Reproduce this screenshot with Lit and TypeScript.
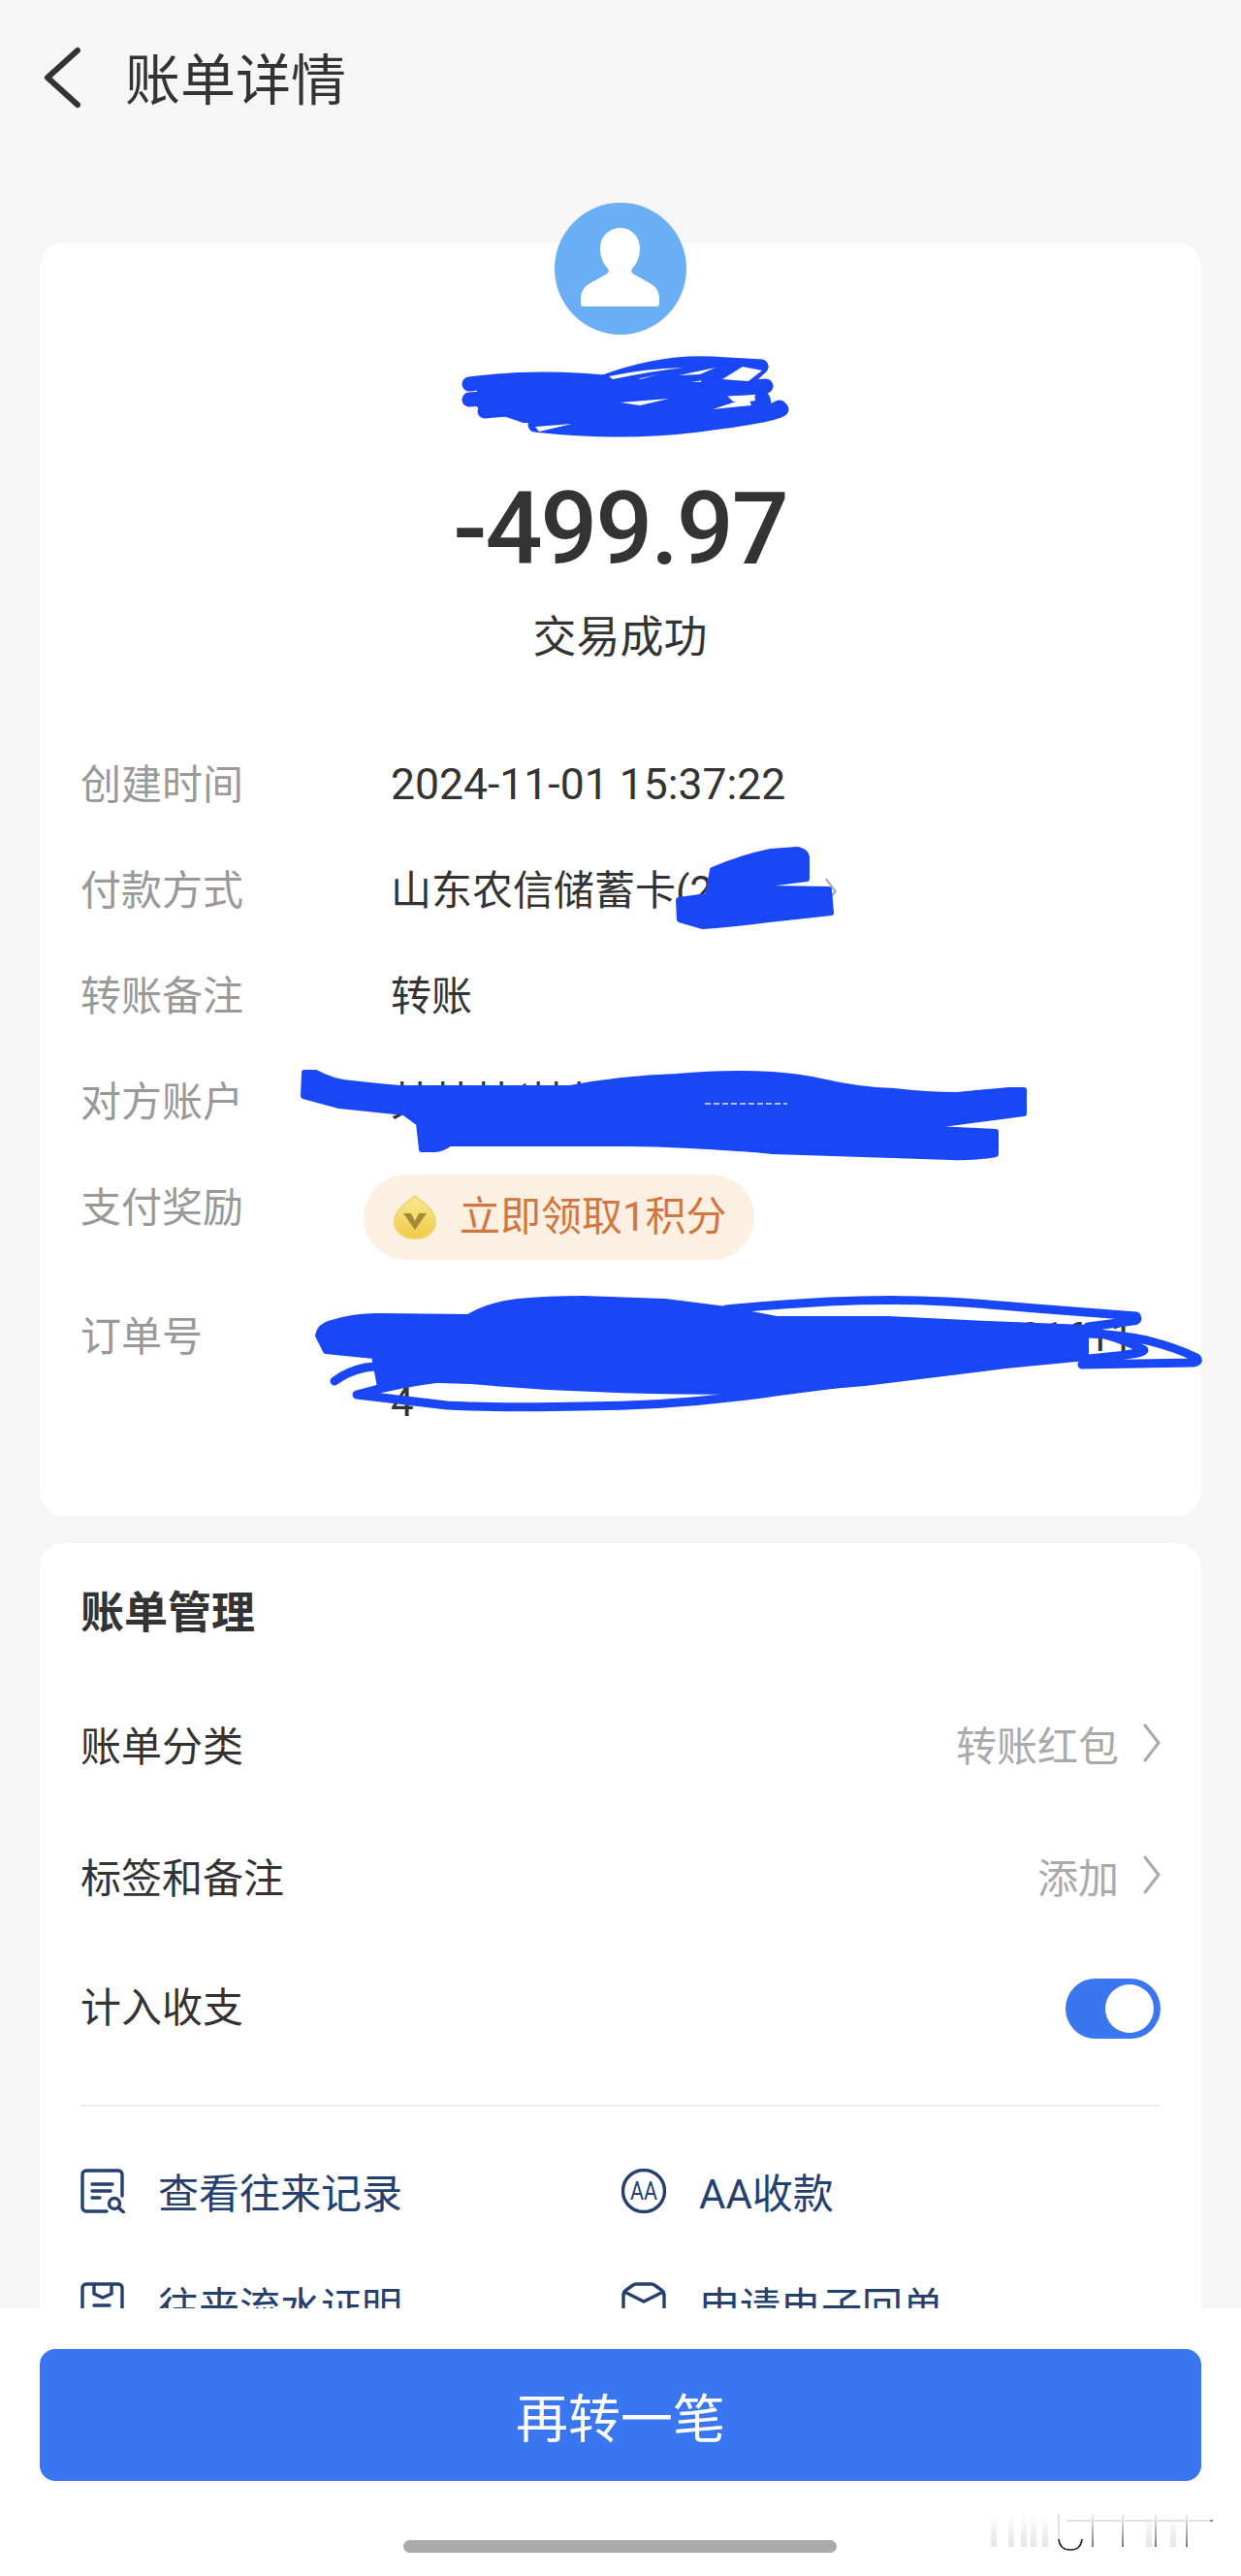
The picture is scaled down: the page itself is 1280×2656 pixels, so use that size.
import { LitElement, html, css, svg } from 'lit';
import { customElement } from 'lit/decorators.js';

const chevron = html`<svg class="chev" viewBox="0 0 20 44" fill="none" stroke="#aaa" stroke-width="3" stroke-linecap="round" stroke-linejoin="round"><path d="M3 4 L17 22 L3 40"/></svg>`;

const iconRecords = svg`
  <path d="M27 44 H6 a4 4 0 0 1 -4 -4 V6 a4 4 0 0 1 4 -4 H39 a4 4 0 0 1 4 4 V28"/>
  <path d="M12 16 H33 M12 23 H31 M12 30 H20"/>
  <circle cx="35" cy="36" r="5.5"/>
  <path d="M39 40 L44.5 45"/>`;

const iconProof = svg`
  <path d="M27 44 H6 a4 4 0 0 1 -4 -4 V6 a4 4 0 0 1 4 -4 H39 a4 4 0 0 1 4 4 V40"/>
  <path d="M14 3 V12 L23 16 L32 12 V3 M14 24 H30"/>`;

const iconAA = svg`
  <circle cx="23" cy="23" r="21.5"/>
  <text x="9" y="32" font-family="Roboto, sans-serif" font-size="26" font-weight="400" fill="#24406f" stroke="none" textLength="28" lengthAdjust="spacingAndGlyphs">AA</text>`;

const iconMail = svg`
  <path d="M2 40 V14 Q2 10 5 8 L12 3 Q13 2 15 2 H31 Q33 2 34 3 L41 8 Q44 10 44 14 V40"/>
  <path d="M3 10 L23 20 L43 10"/>`;

@customElement('app-root')
export class AppRoot extends LitElement {
  static styles = css`
    :host {
      display: block;
      position: relative;
      width: 1280px;
      height: 2656px;
      overflow: hidden;
      background: #f6f6f6;
      color: #333;
      font-family: Roboto, 'Noto Sans CJK SC', sans-serif;
      font-size: 42px;
    }
    .main {
      height: 2380px;
      overflow: hidden;
    }
    .header {
      height: 156px;
      display: flex;
      align-items: center;
      padding-left: 44px;
      gap: 45px;
      font-size: 57px;
      margin-bottom: 94px;
    }
    .header svg {
      width: 40px;
      height: 64px;
      margin-top: 4px;
    }
    .card {
      margin: 0 41px;
      background: #fff;
      border-radius: 26px;
    }
    .bill {
      padding: 0 43px 84px 42px;
      margin-bottom: 28px;
    }
    .summary {
      display: flex;
      flex-direction: column;
      align-items: center;
      text-align: center;
    }
    .avatar {
      width: 136px;
      height: 136px;
      margin-top: -41px;
      border-radius: 50%;
      background: #6aaef5;
    }
    .avatar svg {
      display: block;
      width: 136px;
      height: 136px;
    }
    .name {
      margin-top: 28px;
      height: 90px;
      line-height: 90px;
      font-size: 45px;
    }
    .amount {
      margin-top: 23px;
      font-size: 104px;
      font-weight: 500;
      line-height: 120px;
      letter-spacing: -2.2px;
    }
    .status {
      margin-top: 22px;
      font-size: 45px;
      line-height: 60px;
    }
    .rows {
      margin-top: 67px;
    }
    .row {
      display: flex;
      line-height: 109px;
    }
    .label {
      width: 320px;
      flex: none;
      color: #999;
    }
    .value {
      display: flex;
      align-items: center;
      white-space: nowrap;
    }
    .value.date {
      font-size: 44.5px;
    }
    .value .chev {
      width: 18px;
      height: 30px;
      margin-left: 113px;
    }
    .pill {
      display: flex;
      align-items: center;
      gap: 23px;
      height: 88px;
      margin: 20px 0 25px -28px;
      padding: 0 28px 0 30px;
      border-radius: 44px;
      background: #fcf0e3;
      color: #d2763f;
      line-height: 88px;
    }
    .pill svg {
      width: 46px;
      height: 48px;
    }
    .order {
      margin-top: 21px;
      line-height: 67px;
    }
    .order-tail {
      width: 766px;
      text-align: right;
    }
    .manage {
      padding: 0 42px 40px;
    }
    .section-title {
      height: 138px;
      line-height: 146px;
      font-size: 45px;
      font-weight: 700;
    }
    .item {
      display: flex;
      align-items: center;
      justify-content: space-between;
      height: 136px;
    }
    .item-label-raised {
      margin-bottom: 6px;
    }
    .item-right {
      display: flex;
      align-items: center;
      gap: 24px;
      margin-right: -1px;
      color: #aaa;
    }
    .chev {
      display: block;
      width: 20px;
      height: 44px;
    }
    .toggle {
      display: flex;
      justify-content: flex-end;
      align-items: center;
      width: 98px;
      height: 62px;
      margin-top: 4px;
      padding-right: 7px;
      box-sizing: border-box;
      border-radius: 31px;
      background: #3b76f1;
    }
    .toggle span {
      width: 50px;
      height: 50px;
      border-radius: 50%;
      background: #fff;
    }
    .divider {
      height: 2px;
      margin-top: 33px;
      background: #eee;
    }
    .actions {
      display: grid;
      grid-template-columns: 558px 1fr;
      grid-auto-rows: 117px;
      padding-top: 28px;
      color: #24406f;
    }
    .action {
      display: flex;
      align-items: center;
      gap: 34px;
    }
    .action svg {
      width: 46px;
      height: 46px;
      flex: none;
      fill: none;
      stroke: #24406f;
      stroke-width: 3.4;
      stroke-linecap: round;
      stroke-linejoin: round;
    }
    .footer {
      position: relative;
      height: 276px;
      background: #fff;
    }
    .cta {
      display: flex;
      align-items: center;
      justify-content: center;
      position: relative;
      top: 42px;
      height: 136px;
      margin: 0 41px;
      border-radius: 16px;
      background: #3b76f1;
      color: #fff;
      font-size: 54px;
    }
    .home {
      position: absolute;
      left: 416px;
      top: 239px;
      width: 447px;
      height: 13px;
      border-radius: 7px;
      background: #aaa;
    }
    .watermark {
      position: absolute;
      left: 1000px;
      top: 190px;
      width: 270px;
      height: 70px;
    }
    .scribbles {
      position: absolute;
      left: 0;
      top: 0;
      width: 1280px;
      height: 2656px;
      pointer-events: none;
    }
  `;

  private renderOverlay() {
    const blue = '#1a47f5';
    return html`<svg class="scribbles" viewBox="0 0 1280 2656" fill="none" stroke="${blue}" stroke-linecap="round" stroke-linejoin="round">
      <g stroke-width="15">
        <path d="M484 396 Q560 386 640 396 T790 398"/>
        <path d="M484 412 Q600 402 700 416 T786 410"/>
        <path d="M500 424 Q600 414 690 424 T804 420"/>
        <path d="M552 438 Q640 448 720 438 T806 422"/>
        <path d="M545 404 Q590 396 640 408 T720 404"/>
        <path d="M620 395 Q680 372 735 375 L785 378"/>
        <path d="M640 406 Q700 384 755 382"/>
        <path d="M785 378 L770 392 L730 396"/>
      </g>
      <path fill="${blue}" stroke="none" d="M492 396 L700 396 L700 436 L540 436 L492 420 Z"/>
      <path fill="${blue}" stroke="none" d="M690 402 L750 408 L770 428 L690 440 Z"/>
      <g fill="#fff" stroke="none">
        <path d="M628 388 Q665 380 705 379 Q670 383 632 391 Z"/>
        <path d="M700 387 L738 379 L722 386 Z"/>
        <path d="M745 391 L766 378 L786 382 L772 393 Z"/>
        <path d="M640 415 L690 411 L660 418 Z"/>
        <path d="M735 422 L772 410 L775 418 Z"/>
        <path d="M552 440 L590 437 L556 445 Z"/>
      </g>

      <g fill="${blue}" stroke-width="6">
        <path d="M735 897 Q762 885 795 878 L822 876 Q832 878 832 885 V906 L793 911 V916 L855 917 L857 941 L793 948 Q755 953 725 955 L701 948 L700 928 L730 924 Z"/>
        <path d="M314 1106 H326 Q342 1115 362 1117 Q388 1120 412 1122 H524 L588 1122 Q640 1112 698 1110 Q750 1105 797 1108 Q825 1110 847 1115 Q885 1124 922 1125 Q955 1129 987 1129 L1041 1124 H1056 V1148 L942 1163 L1027 1167 L1027 1190 Q1005 1194 981 1193 L797 1187 Q720 1180 648 1179 L464 1179 Q455 1185 449 1185 H435 L432 1158 L417 1147 Q380 1143 350 1140 L313 1130 Z"/>
        <path d="M328 1377 Q330 1367 342 1364 Q365 1357 389 1357 L483 1358 Q505 1345 534 1342 Q565 1339 601 1339 L686 1342 L749 1350 L801 1360 H916 L1019 1365 L1120 1369 V1400 L1037 1408 L892 1426 L795 1434 Q700 1436 613 1432 Q550 1430 486 1424 L419 1422 L392 1430 L386 1398 L336 1393 Z"/>
      </g>
      <path d="M727 1138 H812" stroke="#dfe6ff" stroke-width="1.6" stroke-linecap="butt" stroke-dasharray="6 3"/>
      <g stroke-width="9">
        <path d="M749 1350 Q800 1345 855 1342 Q920 1339 977 1342 Q1025 1345 1068 1349 L1172 1357 Q1175 1362 1168 1362 L1122 1368"/>
        <path d="M1122 1375 Q1155 1376 1183 1382 Q1215 1390 1234 1400 Q1238 1404 1230 1405 L1116 1407"/>
        <path d="M1122 1372 Q1155 1378 1180 1392 Q1180 1396 1122 1401"/>
        <path d="M892 1423 L807 1434 Q700 1450 601 1450 Q520 1452 461 1449 L368 1438 Q410 1426 461 1420"/>
        <path d="M345 1424 Q358 1414 377 1410 Q430 1404 480 1402"/>
      </g>
    </svg>`;
  }

  private renderWatermark() {
    const faint = [22, 40, 53, 63, 75, 182, 207];
    const dark = [126, 157, 191, 223];
    return html`<svg class="watermark" viewBox="1000 2570 270 70" fill="none">
      <defs>
        <linearGradient id="fa" x1="0" y1="0" x2="0" y2="1"><stop offset="0" stop-color="#ccc" stop-opacity="0"/><stop offset="1" stop-color="#ccc" stop-opacity=".5"/></linearGradient>
        <linearGradient id="da" x1="0" y1="0" x2="0" y2="1"><stop offset="0" stop-color="#666" stop-opacity=".1"/><stop offset="1" stop-color="#555" stop-opacity=".8"/></linearGradient>
      </defs>
      ${faint.map((x) => svg`<rect x="${1000 + x}" y="2592" width="6" height="34" fill="url(#fa)"/>`)}
      ${dark.map((x) => svg`<rect x="${1000 + x}" y="2592" width="2" height="34" fill="url(#da)"/>`)}
      <path d="M1100 2599 H1250" stroke="#e2e2e2" stroke-width="2"/>
      <path d="M1248 2599 H1251" stroke="#888" stroke-width="2"/>
      <path d="M1092 2592 V2618" stroke="#e2e2e2" stroke-width="2"/>
      <path d="M1116 2592 V2618" stroke="url(#da)" stroke-width="2"/>
      <path d="M1092 2618 Q1093 2629 1104 2629 Q1115 2629 1116 2618" stroke="#222" stroke-width="1.6"/>
    </svg>`;
  }

  render() {
    return html`
      <div class="main">
        <div class="header">
          <svg viewBox="0 0 40 64" fill="none" stroke="#333" stroke-width="6" stroke-linecap="round" stroke-linejoin="round"><path d="M36 4 L5 32 L36 60"/></svg>
          <span>账单详情</span>
        </div>

        <div class="card bill">
          <div class="summary">
            <div class="avatar">
              <svg viewBox="0 0 136 136"><path fill="#fff" d="M68 26 C79 26 88 35 88 47 C88 57 84 64 80 68 C78 71 80 73 84 75 L100 84 C105 87 108 92 108 100 V104 Q108 107 105 107 H30 Q27 107 27 104 V100 C27 92 30 87 35 84 L51 75 C55 73 57 71 55 68 C51 64 47 57 47 47 C47 35 56 26 68 26 Z"/></svg>
            </div>
            <div class="name">某某(某某)</div>
            <div class="amount">-499.97</div>
            <div class="status">交易成功</div>
          </div>

          <div class="rows">
            <div class="row"><div class="label">创建时间</div><div class="value date">2024-11-01 15:37:22</div></div>
            <div class="row"><div class="label">付款方式</div><div class="value">山东农信储蓄卡(2${chevron}</div></div>
            <div class="row"><div class="label">转账备注</div><div class="value">转账</div></div>
            <div class="row"><div class="label">对方账户</div><div class="value">某某某(某某)</div></div>
            <div class="row">
              <div class="label">支付奖励</div>
              <div class="pill">
                <svg viewBox="0 0 46 48">
                  <defs><linearGradient id="coin" x1="0" y1="0" x2="0" y2="1"><stop offset="0" stop-color="#f6ec90"/><stop offset="1" stop-color="#f3c845"/></linearGradient></defs>
                  <path fill="url(#coin)" stroke="#ecd67a" stroke-width="2" d="M23 2 C28 8 44 14 44 29 C44 40 34 46 23 46 C12 46 2 40 2 29 C2 14 18 8 23 2 Z"/>
                  <path fill="#a68a3a" d="M11 20 H19 L23 28 L27 20 H35 L23 37 Z"/>
                </svg>
                <span>立即领取1积分</span>
              </div>
            </div>
            <div class="row">
              <div class="label">订单号</div>
              <div class="order">
                <div class="order-tail">101611</div>
                <div>4</div>
              </div>
            </div>
          </div>
        </div>

        <div class="card manage">
          <div class="section-title">账单管理</div>
          <div class="item"><span>账单分类</span><div class="item-right"><span>转账红包</span>${chevron}</div></div>
          <div class="item"><span>标签和备注</span><div class="item-right"><span>添加</span>${chevron}</div></div>
          <div class="item"><span class="item-label-raised">计入收支</span><div class="toggle"><span></span></div></div>
          <div class="divider"></div>
          <div class="actions">
            <div class="action"><svg viewBox="0 0 46 46">${iconRecords}</svg><span>查看往来记录</span></div>
            <div class="action"><svg viewBox="0 0 46 46">${iconAA}</svg><span>AA收款</span></div>
            <div class="action"><svg viewBox="0 0 46 46">${iconProof}</svg><span>往来流水证明</span></div>
            <div class="action"><svg viewBox="0 0 46 46">${iconMail}</svg><span>申请电子回单</span></div>
          </div>
        </div>
      </div>

      <div class="footer">
        <div class="cta">再转一笔</div>
        <div class="home"></div>
        ${this.renderWatermark()}
      </div>
      ${this.renderOverlay()}
    `;
  }
}
